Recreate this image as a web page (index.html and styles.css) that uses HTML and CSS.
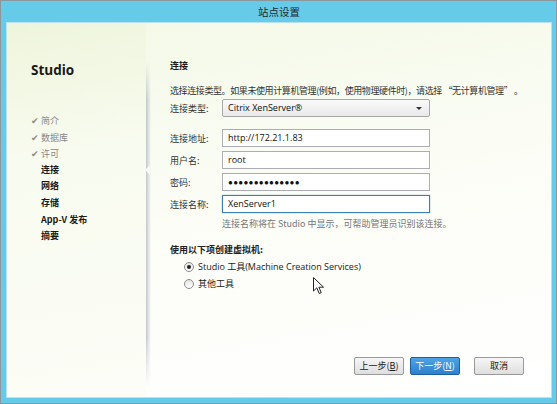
FILE: index.html
```html
<!DOCTYPE html>
<html lang="zh">
<head>
<meta charset="utf-8">
<title>站点设置</title>
<link rel="stylesheet" href="styles.css">
</head>
<body>
<div class="window">
  <div class="titlebar">站点设置</div>
  <div class="content">
    <div class="side">
      <div class="brand">Studio</div>
      <ul class="steps">
        <li class="done"><span class="chk">✔</span>简介</li>
        <li class="done"><span class="chk">✔</span>数据库</li>
        <li class="done"><span class="chk">✔</span>许可</li>
        <li class="current">连接</li>
        <li>网络</li>
        <li>存储</li>
        <li>App-V 发布</li>
        <li>摘要</li>
      </ul>
    </div>
    <div class="main">
      <div class="notch"></div>
      <h1 class="heading">连接</h1>
      <p class="desc">选择连接类型。如果未使用计算机管理(例如，使用物理硬件时)，请选择 “无计算机管理” 。</p>
      <div class="row first">
        <span class="label">连接类型:</span>
        <div class="select"><span>Citrix XenServer®</span><span class="caret"></span></div>
      </div>
      <div class="row gap">
        <span class="label">连接地址:</span>
        <div class="input">http://172.21.1.83</div>
      </div>
      <div class="row">
        <span class="label">用户名:</span>
        <div class="input">root</div>
      </div>
      <div class="row">
        <span class="label">密码:</span>
        <div class="input dots">●●●●●●●●●●●●●●</div>
      </div>
      <div class="row">
        <span class="label">连接名称:</span>
        <div class="input focus">XenServer1</div>
      </div>
      <p class="help">连接名称将在 Studio 中显示，可帮助管理员识别该连接。</p>
      <p class="subhead">使用以下项创建虚拟机:</p>
      <div class="radio"><span class="dot on"></span>Studio 工具(Machine Creation Services)</div>
      <div class="radio"><span class="dot"></span>其他工具</div>
      <div class="buttons">
        <button class="btn">上一步(<u>B</u>)</button>
        <button class="btn primary">下一步(<u>N</u>)</button>
        <button class="btn cancel">取消</button>
      </div>
      <svg class="cursor" width="12" height="18" viewBox="0 0 12 18"><path d="M0.5 0.5 L0.5 14 L3.8 10.8 L6.2 16.5 L8.2 15.6 L5.9 10.2 L10.5 10.2 Z" fill="#fff" stroke="#222" stroke-width="1"/></svg>
    </div>
  </div>
</div>
</body>
</html>
```
FILE: styles.css
```css
* { box-sizing: border-box; }
html, body { margin: 0; padding: 0; }
body {
  width: 557px;
  height: 404px;
  overflow: hidden;
  font-family: "Noto Sans CJK SC", "Open Sans", sans-serif;
  font-size: 9px;
  color: #222;
  background: #fff;
}
.window {
  width: 557px;
  height: 404px;
  border: 1px solid #8a979c;
  background: #66cae9;
  padding: 0 4px 5px 5px;
  display: flex;
  flex-direction: column;
}
.titlebar {
  height: 21px;
  line-height: 21px;
  text-align: center;
  font-size: 10.5px;
  color: #1e2a30;
}
.content {
  flex: 1;
  display: flex;
  border: 1px solid #b9e2ee;
  background: linear-gradient(170deg, #eef5dc 0%, #f8fbef 30%, #fdfef9 100%);
}
.side {
  flex: none;
  width: 139px;
  padding: 37px 0 0 24px;
}
.brand {
  font-family: "Open Sans", "Noto Sans", sans-serif;
  font-weight: 700;
  font-size: 13.5px;
  color: #1a1a1a;
  line-height: 20px;
}
.steps {
  list-style: none;
  margin: 32px 0 0 0;
  padding: 0;
}
.steps li {
  height: 16.6px;
  line-height: 16.6px;
  padding-left: 10px;
  color: #1a1a1a;
  font-weight: 700;
  white-space: nowrap;
}
.steps li.done {
  color: #888;
  padding-left: 0;
  font-weight: 400;
}
.chk { display: inline-block; width: 10px; color: #8a8a8a; font-size: 8.5px; }
.main {
  flex: 1;
  position: relative;
  padding: 35px 0 0 24px;
  background: linear-gradient(170deg, #f4f9e8 0%, #fbfdf5 40%, #ffffff 100%);
}
.main::before {
  content: "";
  position: absolute;
  left: 0;
  top: 38px;
  bottom: 10px;
  width: 5px;
  background: linear-gradient(to right, rgba(150,155,170,0.55), rgba(150,155,170,0));
  -webkit-mask: linear-gradient(to bottom, transparent, #000 12%, #000 85%, transparent);
  mask: linear-gradient(to bottom, transparent, #000 12%, #000 85%, transparent);
}
.notch {
  position: absolute;
  left: -1px;
  top: 142px;
  width: 0; height: 0;
  border-top: 5px solid transparent;
  border-bottom: 5px solid transparent;
  border-right: 5px solid #fbfcf6;
}
.heading {
  margin: 0;
  font-size: 9px;
  font-weight: 700;
  line-height: 16px;
  color: #1a1a1a;
}
.desc {
  margin: 9px 0 0 0;
  line-height: 16px;
  color: #333;
  white-space: nowrap;
  letter-spacing: -0.4px;
}
.row {
  display: flex;
  align-items: center;
  margin-top: 4px;
  height: 18px;
}
.label { width: 52px; color: #333; }
.input, .select {
  width: 208px;
  height: 18px;
  border: 1px solid #abadb3;
  background: #fff;
  padding: 0 5px;
  line-height: 16px;
  font-family: "Open Sans", "Noto Sans", sans-serif;
  font-size: 9px;
  color: #111;
}
.row + .row { margin-top: 4px; }
.row.first { margin-top: 0; }
.row.gap { margin-top: 12px; }
.select {
  display: flex;
  justify-content: space-between;
  align-items: center;
  background: linear-gradient(#fafafa, #e9e9e9);
  border-color: #a8a8a8;
  border-radius: 2px;
}
.caret {
  width: 0; height: 0;
  border-left: 3px solid transparent;
  border-right: 3px solid transparent;
  border-top: 3px solid #333;
  margin-right: 2px;
}
.dots { font-size: 8px; letter-spacing: 0.3px; }
.focus { border-color: #3c7fb1; box-shadow: 0 0 1px #5a9bd0; }
.help {
  margin: 3px 0 0 52px;
  line-height: 16px;
  color: #777;
}
.subhead {
  margin: 10px 0 0 0;
  font-weight: 700;
  line-height: 16px;
  color: #222;
}
.radio {
  display: flex;
  align-items: center;
  margin-left: 14px;
  height: 17px;
  color: #222;
  font-family: "Open Sans", "Noto Sans CJK SC", sans-serif;
}
.radio:first-of-type { margin-top: 1px; }
.dot {
  width: 10px; height: 10px;
  border-radius: 50%;
  border: 1px solid #8c8c8c;
  background: linear-gradient(#e4e4e4, #fff);
  margin-right: 4px;
  display: inline-flex;
  align-items: center;
  justify-content: center;
}
.dot.on::after {
  content: "";
  width: 4px; height: 4px;
  border-radius: 50%;
  background: #222;
}
.buttons {
  display: flex;
  margin-top: 65px;
  margin-left: 184px;
}
.btn {
  width: 50px;
  height: 18px;
  padding: 0;
  font-family: "Noto Sans CJK SC", sans-serif;
  font-size: 9px;
  line-height: 16px;
  color: #222;
  border: 1px solid #9a9a9a;
  border-radius: 2px;
  background: linear-gradient(#f6f6f6, #dedede);
  margin-right: 6px;
}
.btn.primary {
  background: linear-gradient(#4ea3e6, #2e80cc);
  border-color: #1c5f9e;
  color: #fff;
}
.btn.cancel { margin-left: 8px; }
.cursor {
  position: absolute;
  left: 167px;
  top: 254px;
}
```
